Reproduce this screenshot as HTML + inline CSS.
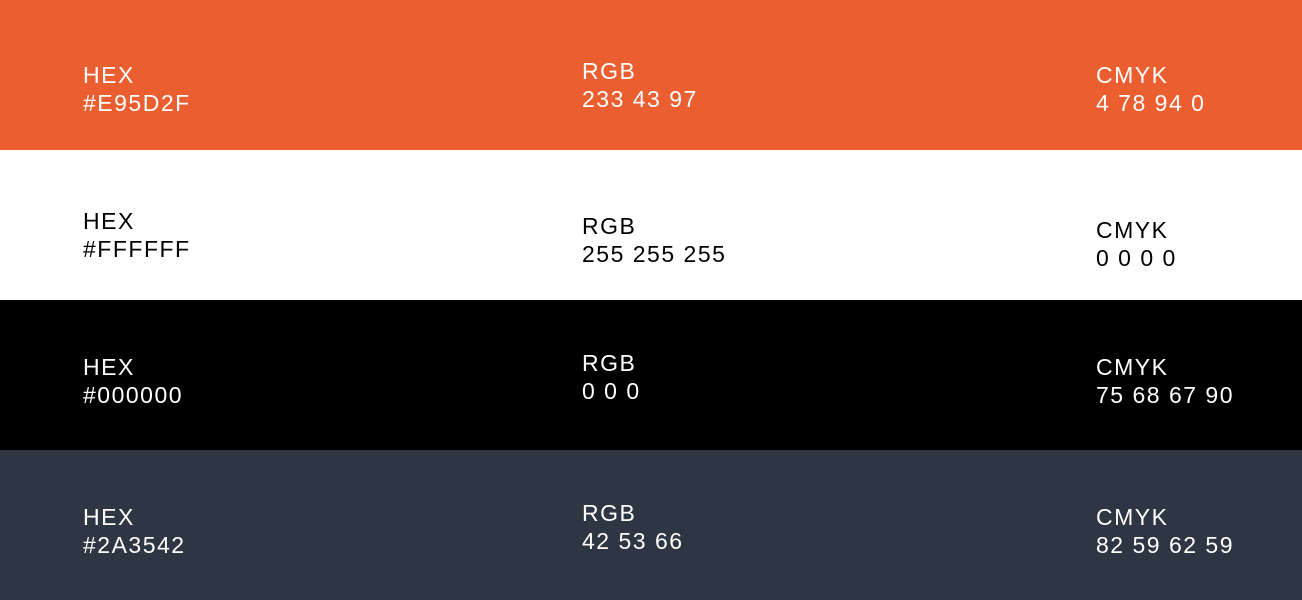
<!DOCTYPE html>
<html><head><meta charset="utf-8"><style>
html,body{margin:0;padding:0;width:1302px;height:600px;overflow:hidden;font-family:"Liberation Sans",sans-serif}
.band{position:absolute;left:0;width:1302px;height:150px}
.t{position:absolute;font-size:23px;line-height:28px;letter-spacing:1.5px;white-space:nowrap}
</style></head><body>
<div class="band" style="top:0;background:#EB5E30;color:#fff">
<div class="t" style="left:83px;top:61px">HEX<br>#E95D2F</div>
<div class="t" style="left:582px;top:57px">RGB<br>233 43 97</div>
<div class="t" style="left:1096px;top:61px">CMYK<br>4 78 94 0</div>
</div>
<div class="band" style="top:150px;background:#fff;color:#000">
<div class="t" style="left:83px;top:57px">HEX<br>#FFFFFF</div>
<div class="t" style="left:582px;top:62px">RGB<br>255 255 255</div>
<div class="t" style="left:1096px;top:66px">CMYK<br>0 0 0 0</div>
</div>
<div class="band" style="top:300px;background:#000;color:#fff">
<div class="t" style="left:83px;top:53px">HEX<br>#000000</div>
<div class="t" style="left:582px;top:49px">RGB<br>0 0 0</div>
<div class="t" style="left:1096px;top:53px">CMYK<br>75 68 67 90</div>
</div>
<div class="band" style="top:450px;background:#2D3642;color:#fff">
<div class="t" style="left:83px;top:53px">HEX<br>#2A3542</div>
<div class="t" style="left:582px;top:49px">RGB<br>42 53 66</div>
<div class="t" style="left:1096px;top:53px">CMYK<br>82 59 62 59</div>
</div>
</body></html>
